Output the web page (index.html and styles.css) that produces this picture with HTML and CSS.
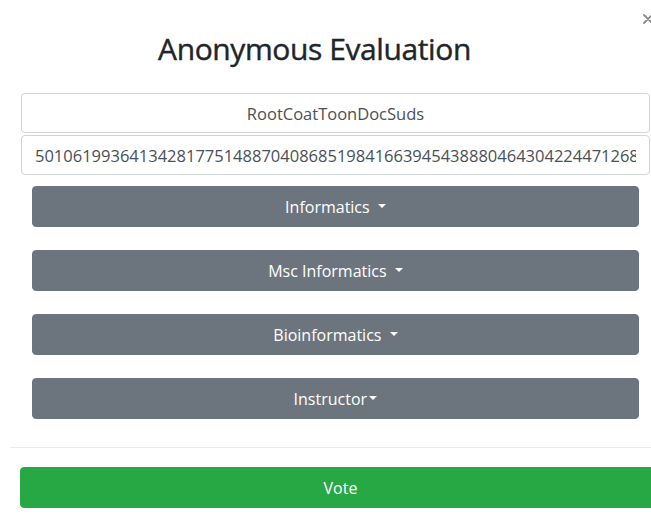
FILE: index.html
```html
<!DOCTYPE html>
<html lang="en">
<head>
<meta charset="utf-8">
<title>Anonymous Evaluation</title>
<link rel="stylesheet" href="styles.css">
</head>
<body>
<div class="modal">
  <div class="modal-header">
    <h3 class="modal-title">Anonymous Evaluation</h3>
    <button class="close" type="button" aria-label="Close">
      <svg class="close-icon" width="10" height="10" viewBox="0 0 10 10" aria-hidden="true">
        <path d="M1 1 L9 9 M9 1 L1 9" stroke="currentColor" stroke-width="1.8" stroke-linecap="round" fill="none"/>
      </svg>
    </button>
  </div>
  <div class="modal-body">
    <input class="form-control text-center" type="text" value="RootCoatToonDocSuds" readonly>
    <input class="form-control form-control-gap" type="text" value="50106199364134281775148870408685198416639454388804643042244712689052417" readonly>
    <div class="groups">
      <button class="btn btn-secondary dropdown-toggle" type="button">Informatics </button>
      <button class="btn btn-secondary dropdown-toggle" type="button">Msc Informatics </button>
      <button class="btn btn-secondary dropdown-toggle" type="button">Bioinformatics </button>
      <button class="btn btn-secondary dropdown-toggle tight" type="button">Instructor</button>
    </div>
  </div>
  <div class="modal-footer">
    <button class="btn btn-success btn-block" type="button">Vote</button>
  </div>
</div>
</body>
</html>
```

FILE: styles.css
```css
html, body {
  margin: 0;
  padding: 0;
  background: #fff;
  overflow: hidden;
}

body {
  font-family: "Open Sans", "Noto Sans", sans-serif;
  color: #212529;
}

.modal {
  margin-left: 10px;
  width: 651px;
}

/* header: centred title with the close cross on the right */
.modal-header {
  display: flex;
  align-items: flex-start;
  padding: 14px 0 0 10px;
}

.modal-title {
  flex: 1;
  margin: 17px 0 0;
  text-align: center;
  font-size: 30px;
  line-height: 36px;
  font-weight: 400;
  letter-spacing: -0.4px;
  color: #212529;
  -webkit-text-stroke: 0.4px #212529;
}

.close {
  width: 52px;
  padding: 0 0 0 34px;
  margin: 0;
  border: 0;
  background: transparent;
  color: #8a8a8a;
  text-align: left;
  line-height: 0;
  cursor: pointer;
}

.close-icon {
  display: block;
}

/* body: two read-only fields and the group dropdowns */
.modal-body {
  padding: 26px 11px 0 11px;
}

.form-control {
  display: block;
  box-sizing: border-box;
  width: 100%;
  height: 40px;
  padding: 0 13px;
  margin: 0;
  font-family: inherit;
  font-size: 16.5px;
  color: #495057;
  background: #fff;
  border: 1px solid #ced4da;
  border-radius: 4px;
  outline: none;
}

.form-control-gap {
  margin-top: 2px;
}

.text-center {
  text-align: center;
}

.groups {
  display: flex;
  flex-direction: column;
  gap: 23px;
  padding: 11px 11px 0;
}

.btn {
  display: block;
  box-sizing: border-box;
  width: 100%;
  height: 41px;
  margin: 0;
  padding: 0 12px;
  font-family: inherit;
  font-size: 16px;
  color: #fff;
  border: 1px solid transparent;
  border-radius: 4px;
  text-align: center;
  cursor: pointer;
}

.btn-secondary {
  background: #6c757d;
  border-color: #6c757d;
}

.btn-success {
  background: #28a745;
  border-color: #28a745;
}

.dropdown-toggle {
  white-space: pre;
}

.dropdown-toggle::after {
  content: "";
  display: inline-block;
  margin-left: 0.255em;
  vertical-align: 0.255em;
  border-top: 0.3em solid;
  border-right: 0.3em solid transparent;
  border-left: 0.3em solid transparent;
  border-bottom: 0;
}

.dropdown-toggle.tight::after {
  margin-left: 0.15em;
}

/* footer: divider line and the full-width vote button */
.modal-footer {
  margin-top: 28px;
  border-top: 1px solid #e9ecef;
  padding: 19px 0 0 10px;
}
```
